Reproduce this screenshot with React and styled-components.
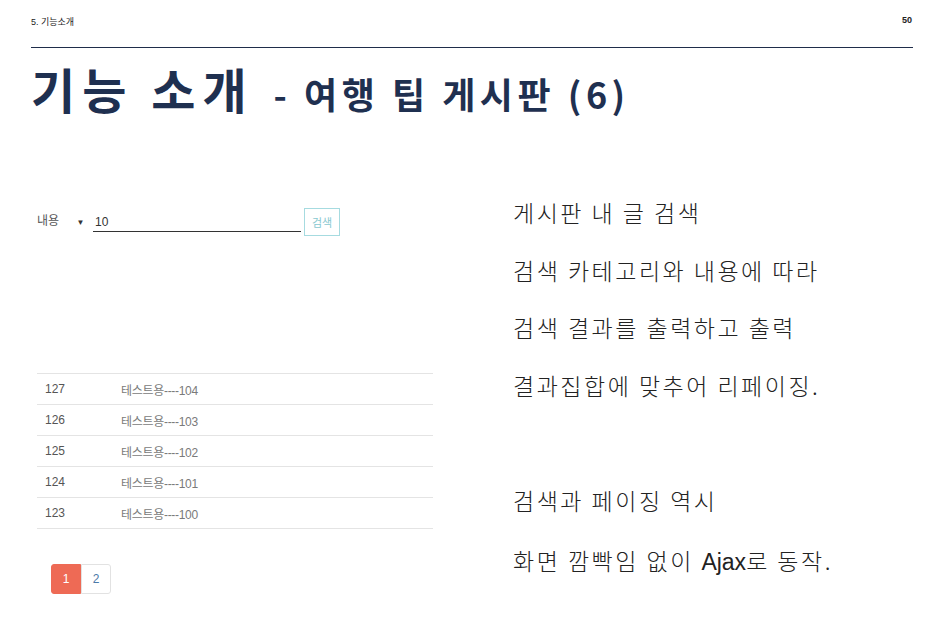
import React from 'react';
import styled, { createGlobalStyle } from 'styled-components';

const GlobalStyle = createGlobalStyle`
  html, body {
    margin: 0;
    padding: 0;
    background: #ffffff;
  }
  body {
    font-family: "Noto Sans CJK KR", "Noto Sans", sans-serif;
  }
`;

const rows = [
  { no: 127, title: '테스트용----104' },
  { no: 126, title: '테스트용----103' },
  { no: 125, title: '테스트용----102' },
  { no: 124, title: '테스트용----101' },
  { no: 123, title: '테스트용----100' },
];

const App = () => {
  return (
    <>
      <GlobalStyle />
      <Slide>
        <TopBar>
          <Crumb>5. 기능소개</Crumb>
          <PageNo>50</PageNo>
        </TopBar>
        <Title>
          기능 소개<Sub>- 여행 팁 게시판 (6)</Sub>
        </Title>
        <Body>
          <Shot>
            <SearchRow>
              <Category>
                내용 <Caret>▼</Caret>
              </Category>
              <SearchInput>10</SearchInput>
              <SearchButton>검색</SearchButton>
            </SearchRow>
            <Table>
              {rows.map((r) => (
                <Row key={r.no}>
                  <NoCell>{r.no}</NoCell>
                  <TitleCell>{r.title}</TitleCell>
                </Row>
              ))}
            </Table>
            <Pager>
              <PageBtn active>1</PageBtn>
              <PageBtn>2</PageBtn>
            </Pager>
          </Shot>
          <Notes>
            <Line>게시판 내 글 검색</Line>
            <Line>검색 카테고리와 내용에 따라</Line>
            <Line>검색 결과를 출력하고 출력</Line>
            <Line>결과집합에 맞추어 리페이징.</Line>
            <Line gap={85}>검색과 페이징 역시</Line>
            <Line gap={30}>
              화면 깜빡임 없이 <Latin>Ajax</Latin>로 동작.
            </Line>
          </Notes>
        </Body>
      </Slide>
    </>
  );
};

export default App;

const Slide = styled.div`
  width: 939px;
  height: 625px;
  box-sizing: border-box;
  padding: 12px 26px 0 31px;
  overflow: hidden;
`;

const TopBar = styled.div`
  display: flex;
  justify-content: space-between;
  align-items: flex-start;
  height: 36px;
  padding-top: 3px;
  border-bottom: 1px solid #1f2d4a;
  font-family: "Liberation Sans", "Noto Sans CJK KR", sans-serif;
  font-size: 9px;
  color: #222;
  box-sizing: border-box;
`;

const Crumb = styled.span``;

const PageNo = styled.span`
  font-weight: bold;
  margin-right: 1px;
`;

const Title = styled.h1`
  margin: 8px 0 0 0;
  font-family: "Noto Sans CJK KR", sans-serif;
  font-weight: 700;
  font-size: 48px;
  line-height: 64px;
  color: #1f3050;
  letter-spacing: 7px;
  white-space: nowrap;
`;

const Sub = styled.span`
  font-size: 36px;
  letter-spacing: 4.5px;
  margin-left: 20px;
`;

const Body = styled.div`
  display: flex;
  margin-top: 77px;
`;

const Shot = styled.div`
  width: 402px;
  padding-left: 6px;
  font-family: "Liberation Sans", "Noto Sans CJK KR", sans-serif;
  color: #555;
`;

const SearchRow = styled.div`
  display: flex;
  align-items: flex-end;
  height: 30px;
`;

const Category = styled.div`
  font-size: 12px;
  color: #555;
  width: 56px;
  padding-bottom: 4px;
`;

const Caret = styled.span`
  font-size: 8px;
  margin-left: 14px;
  color: #333;
`;

const SearchInput = styled.div`
  width: 208px;
  border-bottom: 1px solid #333;
  font-size: 12px;
  color: #333;
  padding: 0 0 2px 2px;
  box-sizing: border-box;
`;

const SearchButton = styled.div`
  width: 36px;
  height: 28px;
  margin-left: 3px;
  margin-bottom: -4px;
  border: 1px solid #a6dbe0;
  color: #88c8d0;
  font-size: 11px;
  display: flex;
  align-items: center;
  justify-content: center;
  box-sizing: border-box;
`;

const Table = styled.div`
  margin-top: 141px;
  width: 396px;
  border-top: 1px solid #e4e4e4;
`;

const Row = styled.div`
  display: flex;
  align-items: center;
  height: 30px;
  border-bottom: 1px solid #e4e4e4;
  font-size: 12px;
  color: #666;
`;

const NoCell = styled.div`
  width: 76px;
  padding-left: 8px;
  color: #555;
`;

const TitleCell = styled.div`
  letter-spacing: -0.3px;
  color: #7a7a7a;
`;

const Pager = styled.div`
  display: flex;
  margin: 35px 0 0 14px;
`;

const PageBtn = styled.div`
  width: 30px;
  height: 30px;
  display: flex;
  align-items: center;
  justify-content: center;
  font-size: 12px;
  box-sizing: border-box;
  border: 1px solid ${(p) => (p.active ? '#ee6a55' : '#e2e2e2')};
  background: ${(p) => (p.active ? '#ee6a55' : '#fff')};
  color: ${(p) => (p.active ? '#fff' : '#4b7aa8')};
  border-radius: ${(p) => (p.active ? '3px 0 0 3px' : '0 3px 3px 0')};
`;

const Notes = styled.div`
  margin-left: 74px;
  margin-top: -5px;
  display: flex;
  flex-direction: column;
  font-family: "Noto Sans CJK KR", sans-serif;
  font-weight: 300;
  font-size: 23px;
  color: #222;
`;

const Line = styled.div`
  line-height: 30px;
  margin-top: ${(p) => (p.gap ? `${p.gap}px` : '27.5px')};
  &:first-child {
    margin-top: 0;
  }
  letter-spacing: 2.5px;
  white-space: nowrap;
`;

const Latin = styled.span`
  font-family: "Liberation Sans", sans-serif;
  font-weight: 400;
  letter-spacing: 0;
`;
